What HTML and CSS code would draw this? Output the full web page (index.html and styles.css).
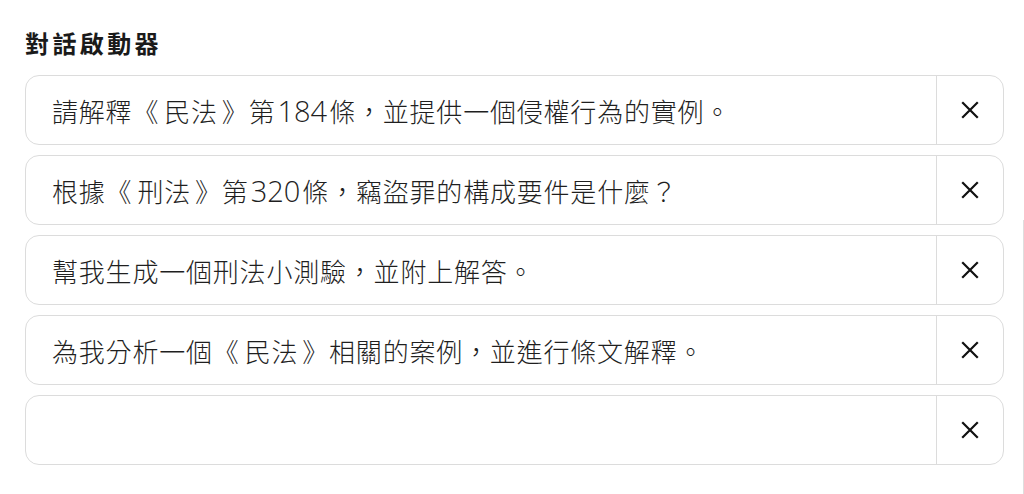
FILE: index.html
```html
<!DOCTYPE html>
<html lang="zh-TW">
<head>
<meta charset="utf-8">
<title>對話啟動器</title>
<link rel="stylesheet" href="styles.css">
</head>
<body>
<main class="panel">
  <h2 class="title">對話啟動器</h2>
  <div class="list">
    <div class="row">
      <div class="field">請解釋<span class="bk-open">《</span>民法<span class="bk-close">》</span>第<span class="num">184</span>條，並提供一個侵權行為的實例。</div>
      <button class="remove" aria-label="移除"><svg viewBox="0 0 18 18" width="18" height="18"><path d="M2 2L16 16M16 2L2 16" stroke="#111" stroke-width="2.2" stroke-linecap="square" fill="none"/></svg></button>
    </div>
    <div class="row">
      <div class="field">根據<span class="bk-open">《</span>刑法<span class="bk-close">》</span>第<span class="num">320</span>條，竊盜罪的構成要件是什麼？</div>
      <button class="remove" aria-label="移除"><svg viewBox="0 0 18 18" width="18" height="18"><path d="M2 2L16 16M16 2L2 16" stroke="#111" stroke-width="2.2" stroke-linecap="square" fill="none"/></svg></button>
    </div>
    <div class="row">
      <div class="field">幫我生成一個刑法小測驗，並附上解答。</div>
      <button class="remove" aria-label="移除"><svg viewBox="0 0 18 18" width="18" height="18"><path d="M2 2L16 16M16 2L2 16" stroke="#111" stroke-width="2.2" stroke-linecap="square" fill="none"/></svg></button>
    </div>
    <div class="row">
      <div class="field">為我分析一個<span class="bk-open">《</span>民法<span class="bk-close">》</span>相關的案例，並進行條文解釋。</div>
      <button class="remove" aria-label="移除"><svg viewBox="0 0 18 18" width="18" height="18"><path d="M2 2L16 16M16 2L2 16" stroke="#111" stroke-width="2.2" stroke-linecap="square" fill="none"/></svg></button>
    </div>
    <div class="row">
      <div class="field"></div>
      <button class="remove" aria-label="移除"><svg viewBox="0 0 18 18" width="18" height="18"><path d="M2 2L16 16M16 2L2 16" stroke="#111" stroke-width="2.2" stroke-linecap="square" fill="none"/></svg></button>
    </div>
  </div>
</main>
<div class="scroll-edge"></div>
</body>
</html>
```
FILE: styles.css
```css
html, body {
  margin: 0;
  padding: 0;
  background: #ffffff;
}
body {
  font-family: "Noto Sans CJK TC", sans-serif;
  color: #222222;
}
.panel {
  padding: 27px 20px 0 25px;
}
.title {
  margin: 0 0 16px 0;
  font-size: 24px;
  line-height: 32px;
  font-weight: 700;
  letter-spacing: 3.4px;
  color: #1a1a1a;
}
.list {
  display: flex;
  flex-direction: column;
  gap: 10px;
}
.row {
  display: flex;
  height: 70px;
  box-sizing: border-box;
  border: 1px solid #dcdcdc;
  border-radius: 14px;
  overflow: hidden;
  background: #fff;
}
.field {
  flex: 1;
  display: flex;
  align-items: center;
  padding-left: 26px;
  font-size: 26px;
  font-weight: 300;
  letter-spacing: 0.8px;
  color: #1f1f1f;
  white-space: nowrap;
}
.num {
  font-family: "Open Sans", sans-serif;
  font-size: 29px;
  font-weight: 300;
  letter-spacing: 0;
  padding: 0 2px;
}
.bk-open {
  padding-right: 5px;
}
.bk-close {
  padding-left: 4px;
}
.remove {
  width: 67px;
  border: 0;
  border-left: 1px solid #dcdcdc;
  background: transparent;
  display: flex;
  align-items: center;
  justify-content: center;
  padding: 0;
  cursor: pointer;
}
.scroll-edge {
  position: fixed;
  right: 0;
  top: 220px;
  bottom: 0;
  width: 1px;
  background: #dedede;
}
```
